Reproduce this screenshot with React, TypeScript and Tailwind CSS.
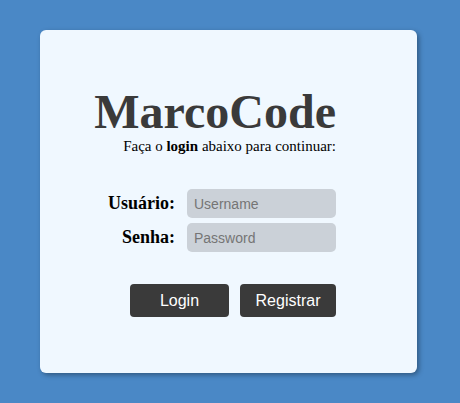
export default function App() {
  return (
    <div className="min-h-screen w-full bg-[#4a88c6] pl-[40px] pt-[30px]">
      <div className="h-[343px] w-[377px] rounded-md bg-[#f0f8ff] pl-[56px] pt-[55px] shadow-[2px_2px_5px_rgba(0,0,0,0.35)]">
        <div className="flex w-[240px] flex-col items-end font-['Liberation_Serif',serif]">
          <h1 className="text-[48px] leading-[53px] font-bold text-[#3a3a3a]">MarcoCode</h1>
          <p className="text-[15px] leading-[17px] text-black">
            Faça o <b>login</b> abaixo para continuar:
          </p>

          <form className="mt-[34px] flex flex-col gap-[5px]">
            <div className="flex items-center gap-[12px]">
              <label className="text-[18px] font-bold text-black">Usuário:</label>
              <input
                type="text"
                placeholder="Username"
                className="h-[29px] w-[149px] rounded-[5px] bg-[#cbd1d8] px-[7px] font-['Liberation_Sans',sans-serif] text-[14px] text-black placeholder:text-[#757575] outline-none"
              />
            </div>
            <div className="flex items-center justify-end gap-[12px]">
              <label className="text-[18px] font-bold text-black">Senha:</label>
              <input
                type="password"
                placeholder="Password"
                className="h-[29px] w-[149px] rounded-[5px] bg-[#cbd1d8] px-[7px] font-['Liberation_Sans',sans-serif] text-[14px] text-black placeholder:text-[#757575] outline-none"
              />
            </div>
          </form>

          <div className="mt-[32px] flex gap-[11px] font-['Liberation_Sans',sans-serif]">
            <button className="h-[33px] w-[99px] rounded-[4px] bg-[#3a3a3a] text-[16px] text-white">
              Login
            </button>
            <button className="h-[33px] w-[96px] rounded-[4px] bg-[#3a3a3a] text-[16px] text-white">
              Registrar
            </button>
          </div>
        </div>
      </div>
    </div>
  );
}
